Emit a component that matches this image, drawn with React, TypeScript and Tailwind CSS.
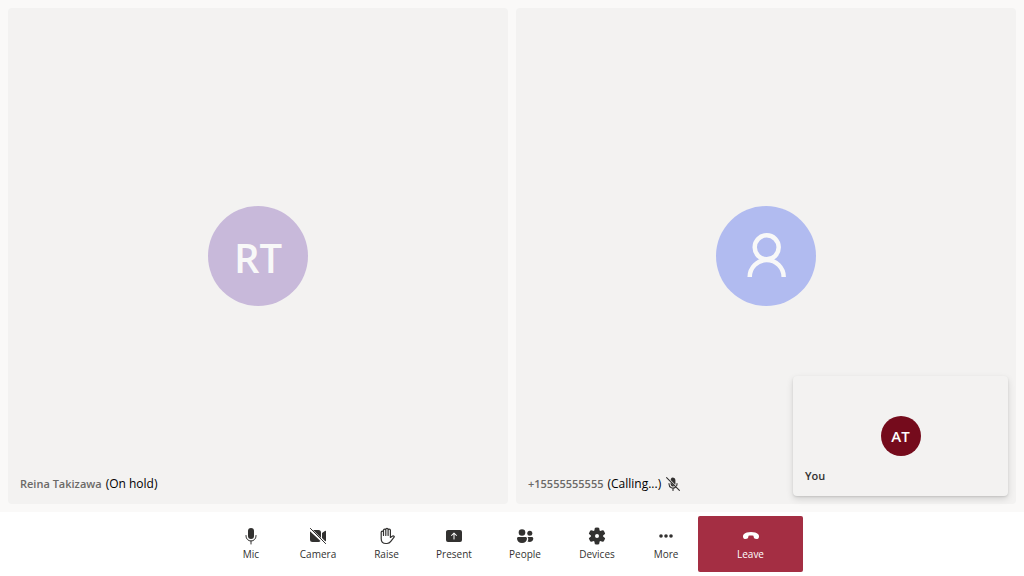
import type { ReactNode } from "react";

function Glyph({ children }: { children: ReactNode }) {
  return (
    <svg viewBox="0 0 20 20" className="size-5" fill="currentColor" aria-hidden="true">
      {children}
    </svg>
  );
}

const MicIcon = () => (
  <Glyph>
    <rect x="7" y="2" width="6" height="11" rx="3" />
    <path
      d="M5 9.500v.5a5 5 0 0 0 10 0v-.5M10 15v3"
      fill="none"
      stroke="currentColor"
      strokeLinecap="round"
    />
  </Glyph>
);

const CameraOffIcon = () => (
  <Glyph>
    <path d="M5.100 4H10.500a2.500 2.500 0 0 1 2.500 2.500v5.400zM2 5.200v8.300A2.500 2.500 0 0 0 4.500 16h6a2.500 2.500 0 0 0 2-1zM14 6.900l2.900-2c.5-.35 1.100 0 1.100.55v9.100c0 .5-.4.800-.8.650L14 12z" />
    <path d="M2.400 2.400l15.200 15.200" stroke="currentColor" strokeLinecap="round" />
  </Glyph>
);

const HandIcon = () => (
  <Glyph>
    <path
      d="M6.500 9.500V4.300a1.150 1.150 0 0 1 2.300 0V9.500M8.800 9V3.600a1.150 1.150 0 0 1 2.300 0V9.500M11.100 9V4.300a1.150 1.150 0 0 1 2.300 0v7.200l1.700-1.300c.6-.5 1.600-.4 2.100.2.200.25.150.5-.1.800l-3.300 4.200C12.800 16.900 12 17.500 10 17.500H9c-2.800 0-4.800-2-4.800-4.800V6.300A1.150 1.150 0 0 1 6.500 6.300"
      fill="none"
      stroke="currentColor"
      strokeWidth="1.200"
      strokeLinecap="round"
      strokeLinejoin="round"
    />
  </Glyph>
);

const PresentIcon = () => (
  <Glyph>
    <path
      fillRule="evenodd"
      d="M4 4h12a2 2 0 0 1 2 2v8a2 2 0 0 1-2 2H4a2 2 0 0 1-2-2V6c0-1.100.9-2 2-2zm6.350 2.650a.5.5 0 0 0-.7 0l-2.500 2.500a.5.5 0 0 0 .7.7L9.500 8.200v4.800a.5.5 0 0 0 1 0V8.200l1.650 1.650a.5.5 0 0 0 .7-.7z"
    />
  </Glyph>
);

const PeopleIcon = () => (
  <Glyph>
    <circle cx="7" cy="6.500" r="3.300" />
    <circle cx="14.800" cy="7.300" r="2.500" />
    <path d="M3.500 11h7c.9 0 1.500.7 1.500 1.500 0 2.600-2 4.500-5 4.500s-5-1.900-5-4.500c0-.8.600-1.500 1.500-1.500zM12.500 11h4.300c.8 0 1.500.6 1.500 1.500 0 2-1.600 3.500-3.800 3.500-.7 0-1.400-.1-2-.4.9-1.200 1.200-3.300 0-4.600z" />
  </Glyph>
);

const SettingsIcon = () => (
  <Glyph>
    <path
      fillRule="evenodd"
      d="M1.910 7.380A8.500 8.500 0 0 1 3.690 4.300a.5.5 0 0 1 .540-.130l1.920.680a1 1 0 0 0 1.320-.760l.360-2a.5.5 0 0 1 .400-.400 8.530 8.530 0 0 1 3.550 0c.200.040.350.200.380.400l.370 2a1 1 0 0 0 1.320.760l1.920-.680a.5.5 0 0 1 .540.130 8.500 8.500 0 0 1 1.780 3.080c.060.200 0 .400-.150.540l-1.560 1.320a1 1 0 0 0 0 1.520l1.560 1.320a.5.5 0 0 1 .150.540 8.500 8.500 0 0 1-1.780 3.080.5.5 0 0 1-.540.130l-1.920-.680a1 1 0 0 0-1.320.760l-.370 2a.5.5 0 0 1-.380.400 8.530 8.530 0 0 1-3.560 0 .5.5 0 0 1-.390-.400l-.360-2a1 1 0 0 0-1.320-.760l-1.920.680a.5.5 0 0 1-.540-.130 8.500 8.500 0 0 1-1.780-3.080.5.5 0 0 1 .150-.540l1.560-1.320a1 1 0 0 0 0-1.520L2.060 7.920a.5.5 0 0 1-.150-.540zM8 10a2 2 0 1 0 4 0 2 2 0 0 0-4 0z"
    />
  </Glyph>
);

const MoreIcon = () => (
  <Glyph>
    <circle cx="5" cy="10" r="1.800" />
    <circle cx="10" cy="10" r="1.800" />
    <circle cx="15" cy="10" r="1.800" />
  </Glyph>
);

const EndCallIcon = () => (
  <Glyph>
    <path d="M18 10.800l-.15.800a1.700 1.700 0 0 1-2 1.350l-1.700-.3a1.700 1.700 0 0 1-1.400-1.400l-.3-1.400C11.600 9.500 10.800 9.400 10 9.400s-1.600.1-2.450.45l-.3 1.400a1.700 1.700 0 0 1-1.400 1.400l-1.700.3a1.700 1.700 0 0 1-2-1.350L2 10.800c-.15-1 .1-1.900.75-2.600C4.400 6.700 6.800 6 10 6s5.600.7 7.250 2.200c.65.700.9 1.600.75 2.600z" />
  </Glyph>
);

const MicOffIcon = () => (
  <svg viewBox="0 0 20 20" className="size-4" fill="currentColor" role="img" aria-label="Muted">
    <path d="M7 8v2a3 3 0 0 0 4.700 2.500zM7.400 3.500A3 3 0 0 1 13 5v5l-.1.800L7.100 5z" />
    <path
      d="M5 9.500v.5a5 5 0 0 0 8.300 3.800M15 9.500v.5c0 .8-.2 1.500-.5 2.200M10 15v3M2 2l16 16"
      fill="none"
      stroke="currentColor"
      strokeWidth="1.400"
      strokeLinecap="round"
    />
  </svg>
);

const PersonIcon = () => (
  <svg viewBox="0 0 50 50" className="size-[50px]" fill="none" stroke="currentColor" strokeWidth="4.500" aria-hidden="true">
    <circle cx="25.700" cy="16.300" r="12" />
    <path d="M8.700 46a17 17 0 0 1 34 0" />
  </svg>
);

const controls = [
  { label: "Mic", icon: <MicIcon />, width: "w-15" },
  { label: "Camera", icon: <CameraOffIcon />, width: "w-[74px]" },
  { label: "Raise", icon: <HandIcon />, width: "w-[63px]" },
  { label: "Present", icon: <PresentIcon />, width: "w-[72px]" },
  { label: "People", icon: <PeopleIcon />, width: "w-[70px]" },
  { label: "Devices", icon: <SettingsIcon />, width: "w-[74px]" },
  { label: "More", icon: <MoreIcon />, width: "w-16" },
];

type TileProps = {
  name: string;
  status: string;
  avatarClass: string;
  muted?: boolean;
  children: ReactNode;
};

function Tile({ name, status, avatarClass, muted, children }: TileProps) {
  return (
    <section className="relative flex min-w-0 flex-1 items-center justify-center rounded bg-[#f3f2f1]">
      <div className={`flex size-25 items-center justify-center rounded-full text-[#f8f8f8] ${avatarClass}`}>
        {children}
      </div>
      <div className="absolute bottom-3 left-3 flex items-center gap-1 leading-4">
        <span className="text-[11px] font-semibold text-[#6b6967]">{name}</span>
        <span className="text-xs text-black">{status}</span>
        {muted && (
          <span className="text-[#323130]">
            <MicOffIcon />
          </span>
        )}
      </div>
    </section>
  );
}

export default function App() {
  return (
    <div className="flex h-screen flex-col bg-[#faf9f8] font-['Open_Sans','Noto_Sans',sans-serif] text-[#323130]">
      <main className="relative flex min-h-0 flex-1 gap-2 p-2">
        <Tile name="Reina Takizawa" status="(On hold)" avatarClass="bg-[#c8b9da]">
          <span className="pt-1 text-[40px] leading-12 font-semibold">RT</span>
        </Tile>
        <Tile name="+15555555555" status="(Calling...)" avatarClass="bg-[#b1bbf0]" muted>
          <PersonIcon />
        </Tile>
        <aside className="absolute right-4 bottom-4 flex h-30 w-[215px] items-center justify-center rounded bg-[#f3f2f1] shadow-[0_3px_7px_rgba(0,0,0,0.13),0_1px_2px_rgba(0,0,0,0.11)]">
          <div className="flex size-10 items-center justify-center rounded-full bg-[#750b1c] text-[15px] font-semibold text-white">
            AT
          </div>
          <span className="absolute bottom-3 left-3 text-[11px] leading-4 font-semibold">You</span>
        </aside>
      </main>
      <footer className="flex justify-center bg-white p-1">
        {controls.map(({ label, icon, width }) => (
          <button
            key={label}
            type="button"
            className={`flex h-14 flex-col items-center justify-center text-[10px] leading-4 ${width}`}
          >
            {icon}
            <span>{label}</span>
          </button>
        ))}
        <button
          type="button"
          className="flex h-14 w-[105px] flex-col items-center justify-center rounded-xs bg-[#a42e43] text-[10px] leading-4 text-white"
        >
          <EndCallIcon />
          <span>Leave</span>
        </button>
      </footer>
    </div>
  );
}
